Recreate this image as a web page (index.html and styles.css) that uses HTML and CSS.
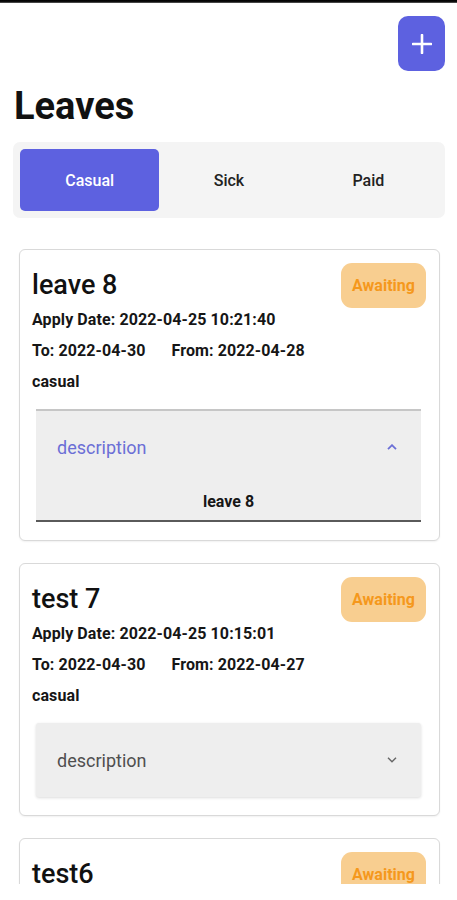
FILE: index.html
```html
<!DOCTYPE html>
<html>
<head>
<meta charset="utf-8">
<title>Leaves</title>
<link rel="stylesheet" href="styles.css">
</head>
<body>
<div class="screen">
  <div class="topbar"></div>
  <div class="actions">
    <button class="add-btn" aria-label="Add">
      <svg width="20" height="20" viewBox="0 0 20 20"><path d="M10 1v18M1 10h18" stroke="#fff" stroke-width="2.6" stroke-linecap="round" fill="none"/></svg>
    </button>
  </div>
  <h1 class="title">Leaves</h1>
  <div class="tabs">
    <div class="tab active">Casual</div>
    <div class="tab">Sick</div>
    <div class="tab">Paid</div>
  </div>
  <div class="list">
    <div class="card">
      <div class="card-head">
        <div class="card-title">leave 8</div>
        <div class="badge">Awaiting</div>
      </div>
      <div class="row first">Apply Date: 2022-04-25 10:21:40</div>
      <div class="row">To: 2022-04-30<span class="from">From: 2022-04-28</span></div>
      <div class="row">casual</div>
      <div class="panel expanded">
        <div class="panel-head">
          <span class="panel-label">description</span>
          <svg width="10" height="6" viewBox="0 0 10 6"><path d="M1 5.2L5 1.2L9 5.2" stroke="#6b6fd6" stroke-width="1.8" fill="none"/></svg>
        </div>
        <div class="panel-body">leave 8</div>
      </div>
    </div>
    <div class="card">
      <div class="card-head">
        <div class="card-title">test 7</div>
        <div class="badge">Awaiting</div>
      </div>
      <div class="row first">Apply Date: 2022-04-25 10:15:01</div>
      <div class="row">To: 2022-04-30<span class="from">From: 2022-04-27</span></div>
      <div class="row">casual</div>
      <div class="panel collapsed">
        <div class="panel-head">
          <span class="panel-label">description</span>
          <svg width="10" height="6" viewBox="0 0 10 6"><path d="M1 0.8L5 4.8L9 0.8" stroke="#666" stroke-width="1.4" fill="none"/></svg>
        </div>
      </div>
    </div>
    <div class="card last">
      <div class="card-head">
        <div class="card-title">test6</div>
        <div class="badge">Awaiting</div>
      </div>
    </div>
  </div>
</div>
</body>
</html>
```
FILE: styles.css
```css
* { box-sizing: border-box; }
html, body { margin: 0; background: #fff; }
body { font-family: Roboto, "Noto Sans", Arial, sans-serif; color: #1a1a1a; }

.screen { height: 884px; overflow: hidden; background: #fff; }

.topbar { height: 3px; background: linear-gradient(#000 0, #111 66%, #777 100%); }

.actions { display: flex; justify-content: flex-end; padding: 13px 12px 0 0; }
.add-btn {
  width: 47px; height: 55px; border: none; border-radius: 10px;
  background: #5d61e0; display: flex; align-items: center; justify-content: center;
  padding: 0; cursor: pointer;
}

.title { margin: 13px 0 0 14px; font-size: 38px; line-height: 44px; font-weight: 700; color: #111; }

.tabs {
  margin: 14px 12px 0 13px; padding: 7px; background: #f4f4f4; border-radius: 7px;
  display: grid; grid-template-columns: 1fr 1fr 1fr;
}
.tab {
  height: 62px; display: flex; align-items: center; justify-content: center;
  font-size: 16px; font-weight: 500; color: #222;
}
.tab.active { background: #5d61e0; color: #fff; border-radius: 5px; }

.list { padding: 31px 17px 0 19px; }

.card {
  border: 1px solid #d9d9d9; border-radius: 6px; padding: 13px 13px 18px 12px;
  box-shadow: 0 1px 2px rgba(0,0,0,0.06); background: #fff;
}
.card + .card { margin-top: 22px; }
.card.last { padding-bottom: 40px; }

.card-head { display: flex; justify-content: space-between; align-items: flex-start; }
.card-title { margin-top: 6px; font-size: 27px; line-height: 32px; font-weight: 500; color: #111; }
.badge {
  width: 85px; height: 45px; border-radius: 11px; background: #f8ce90; color: #f5981c;
  font-size: 16px; font-weight: 700; display: flex; align-items: center; justify-content: center;
}

.row { font-size: 16px; line-height: 20px; font-weight: 700; letter-spacing: 0.1px; margin-top: 11px; color: #161616; }
.row.first { margin-top: 2px; }
.from { margin-left: 26px; }

.panel { margin: 17px 5px 0 4px; background: #eeeeee; }
.panel-head {
  height: 72px; display: flex; align-items: center; justify-content: space-between;
  padding: 0 24px 0 21px;
}
.panel-label { font-size: 18px; font-weight: 400; }
.panel.expanded { border-top: 2px solid #c6c6c6; border-bottom: 2px solid #5a5a5a; }
.panel.expanded .panel-label { color: #6b6fd6; }
.panel.collapsed { border-radius: 3px; box-shadow: 0 1px 3px rgba(0,0,0,0.14); }
.panel.collapsed .panel-head { height: 74px; }
.panel.collapsed .panel-label { color: #4f4f4f; }
.panel-body { padding: 9px 0 8px; text-align: center; font-size: 16px; line-height: 20px; font-weight: 700; color: #161616; }
```
